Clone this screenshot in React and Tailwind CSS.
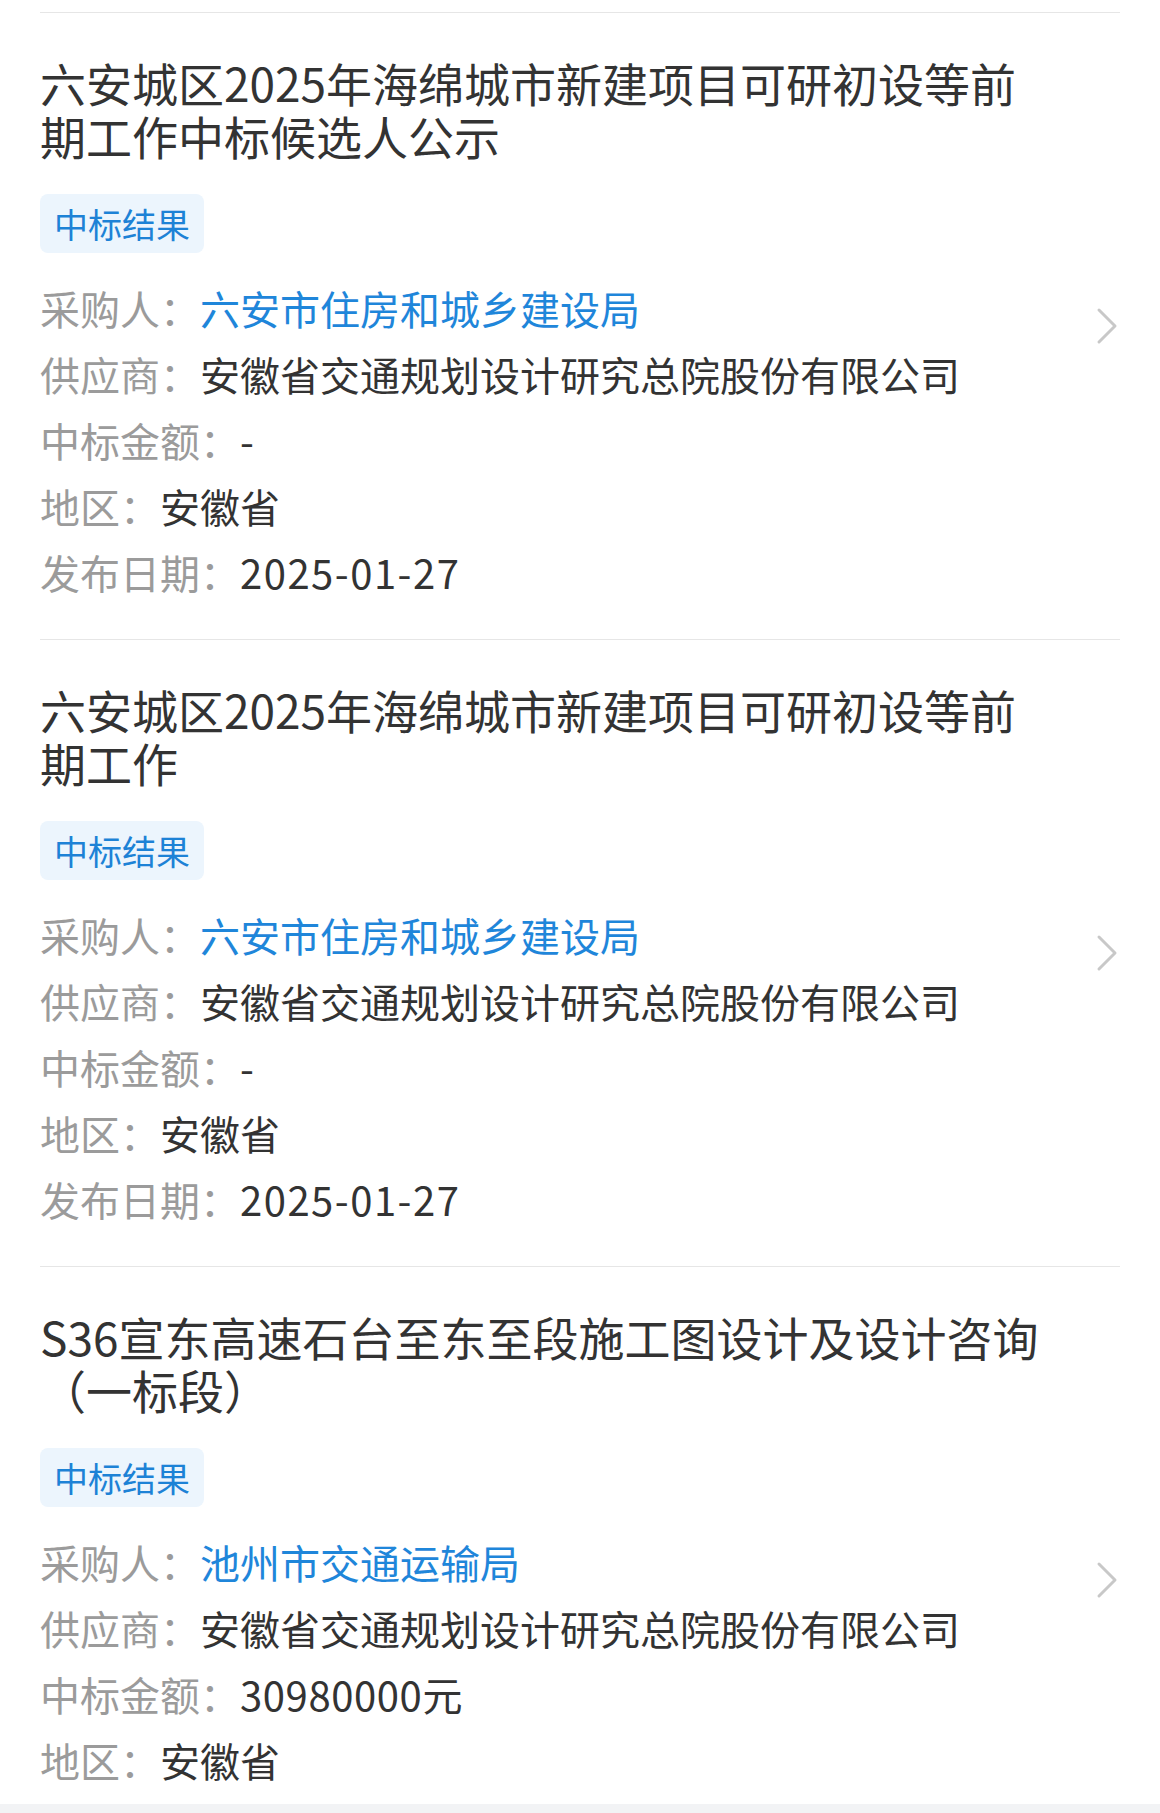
import React from "react";

const notices = [
  {
    title: "六安城区2025年海绵城市新建项目可研初设等前期工作中标候选人公示",
    tag: "中标结果",
    buyer: "六安市住房和城乡建设局",
    supplier: "安徽省交通规划设计研究总院股份有限公司",
    amount: "-",
    region: "安徽省",
    date: "2025-01-27",
  },
  {
    title: "六安城区2025年海绵城市新建项目可研初设等前期工作",
    tag: "中标结果",
    buyer: "六安市住房和城乡建设局",
    supplier: "安徽省交通规划设计研究总院股份有限公司",
    amount: "-",
    region: "安徽省",
    date: "2025-01-27",
  },
  {
    title: "S36宣东高速石台至东至段施工图设计及设计咨询（一标段）",
    tag: "中标结果",
    buyer: "池州市交通运输局",
    supplier: "安徽省交通规划设计研究总院股份有限公司",
    amount: "30980000元",
    region: "安徽省",
    // 发布日期在屏幕外，只留出行高
  },
];

function Row({ label, children }) {
  return (
    <div className="flex h-[66px] items-center text-[40px] leading-[66px] whitespace-nowrap">
      <span className="text-[#9b9b9b]">{label}：</span>
      {children}
    </div>
  );
}

function Chevron() {
  return (
    <svg width="22" height="38" viewBox="0 0 22 38" fill="none" className="shrink-0">
      <path d="M3 3 L19 19 L3 35" stroke="#c8c8c8" strokeWidth="3" strokeLinecap="round" strokeLinejoin="round" />
    </svg>
  );
}

function NoticeCard({ item }) {
  return (
    <div className="flex items-center border-t border-[#e6e6e6]">
      {/* 左侧内容 */}
      <div className="w-[1010px] pt-[43px] pb-[34px]">
        <h2 className="text-[46px] leading-[53px] text-[#333333] font-normal">{item.title}</h2>
        <div className="mt-[32px] inline-flex h-[59px] items-center rounded-[8px] bg-[#ecf5fd] px-[14px] text-[34px] text-[#1d82d6]">
          {item.tag}
        </div>
        <div className="mt-[22px] flex flex-col">
          <Row label="采购人">
            <span className="text-[#1f86da]">{item.buyer}</span>
          </Row>
          <Row label="供应商">
            <span className="text-[#333333]">{item.supplier}</span>
          </Row>
          <Row label="中标金额">
            <span className="text-[#333333] tracking-[0.6px]">{item.amount}</span>
          </Row>
          <Row label="地区">
            <span className="text-[#333333]">{item.region}</span>
          </Row>
          {item.date ? (
            <Row label="发布日期">
              <span className="text-[#333333] tracking-[1.5px]">{item.date}</span>
            </Row>
          ) : (
            <div className="h-[66px]"></div>
          )}
        </div>
      </div>
      <div className="ml-auto mr-[2px] flex items-center">
        <Chevron />
      </div>
    </div>
  );
}

export default function App() {
  return (
    <div className="w-[1160px] h-[1813px] overflow-hidden bg-white font-['Noto_Sans_CJK_SC',sans-serif]">
      <div className="h-[1804px] overflow-hidden px-[40px] pt-[12px]">
        {notices.map((item, index) => (
          <NoticeCard key={index} item={item} />
        ))}
      </div>
      <div className="h-[9px] bg-[#f2f3f5]"></div>
    </div>
  );
}
